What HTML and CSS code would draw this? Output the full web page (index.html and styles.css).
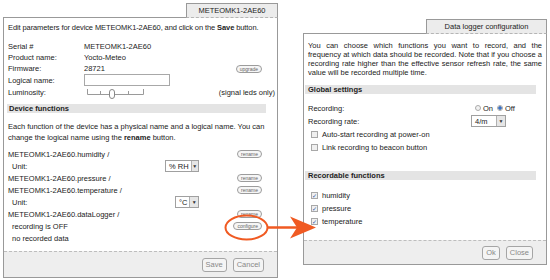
FILE: index.html
```html
<!DOCTYPE html>
<html lang="en">
<head>
    <meta charset="UTF-8">
    <meta name="viewport" content="width=device-width, initial-scale=1.0">
    <title>METEOMK1-2AE60</title>
    <link rel="stylesheet" href="styles.css">
</head>
<body>
    <div class="desk">
        <!-- device settings window -->
        <div class="win win-device">
            <div class="tabs"><div class="tab">METEOMK1-2AE60</div></div>
            <div class="panel">
                <div class="content">
                    <p class="intro">Edit parameters for device METEOMK1-2AE60, and click on the <b>Save</b> button.</p>
                    <div class="props">
                        <span>Serial #</span><span>METEOMK1-2AE60</span><span></span>
                        <span>Product name:</span><span>Yocto-Meteo</span><span></span>
                        <span>Firmware:</span><span>28721</span><span class="right"><button class="mini">upgrade</button></span>
                        <span>Logical name:</span><span><input class="text-in" type="text"></span><span></span>
                        <span>Luminosity:</span>
                        <span>
                            <svg class="slider" width="60" height="14" viewBox="0 0 60 14">
                                <path d="M3.5 4v5.5h56M16.5 6v3.5M29.5 6v3.5M44.5 6v3.5M59.5 4v5.5" fill="none" stroke="#9a9a9a" stroke-width="1"/>
                                <rect x="25.5" y="4.5" width="5" height="9" rx="2.5" fill="#fff" stroke="#888"/>
                            </svg>
                        </span>
                        <span class="right hint">(signal leds only)</span>
                    </div>
                    <div class="section">Device functions</div>
                    <p class="desc">Each function of the device has a physical name and a logical name. You can<br>change the logical name using the <b>rename</b> button.</p>
                    <div class="fn-list">
                        <div class="fn-row"><span class="fn-name">METEOMK1-2AE60.humidity /</span><button class="mini">rename</button></div>
                        <div class="fn-row sub"><span class="fn-name">Unit:</span><span class="select w-rh">% RH<i>&#9660;</i></span></div>
                        <div class="fn-row"><span class="fn-name">METEOMK1-2AE60.pressure /</span><button class="mini">rename</button></div>
                        <div class="fn-row"><span class="fn-name">METEOMK1-2AE60.temperature /</span><button class="mini">rename</button></div>
                        <div class="fn-row sub"><span class="fn-name">Unit:</span><span class="select w-deg">&deg;C<i>&#9660;</i></span></div>
                        <div class="fn-row"><span class="fn-name">METEOMK1-2AE60.dataLogger /</span><button class="mini">rename</button></div>
                        <div class="fn-row sub"><span class="fn-name">recording is OFF</span><button class="mini">configure</button></div>
                        <div class="fn-row sub"><span class="fn-name">no recorded data</span></div>
                    </div>
                </div>
                <div class="footer footer-device">
                    <button class="btn">Save</button>
                    <button class="btn">Cancel</button>
                </div>
            </div>
        </div>

        <!-- data logger window -->
        <div class="win win-logger">
            <div class="tabs"><div class="tab">Data logger configuration</div></div>
            <div class="panel">
                <div class="content">
                    <p class="intro justify">You can choose which functions you want to record, and the frequency at which data should be recorded. Note that if you choose a recording rate higher than the effective sensor refresh rate, the same value will be recorded multiple time.</p>
                    <div class="section">Global settings</div>
                    <div class="settings">
                        <span>Recording:</span>
                        <span class="radios">
                            <span class="radio"></span><span>On</span>
                            <span class="radio on"></span><span>Off</span>
                        </span>
                        <span>Recording rate:</span>
                        <span><span class="select w-rate">4/m<i>&#9660;</i></span></span>
                    </div>
                    <div class="check-row"><span class="check"></span>Auto-start recording at power-on</div>
                    <div class="check-row"><span class="check"></span>Link recording to beacon button</div>
                    <div class="section gap-top">Recordable functions</div>
                    <div class="funcs">
                        <div class="check-row"><span class="check on">&#10003;</span>humidity</div>
                        <div class="check-row"><span class="check on">&#10003;</span>pressure</div>
                        <div class="check-row"><span class="check on">&#10003;</span>temperature</div>
                    </div>
                </div>
                <div class="footer footer-logger">
                    <button class="btn">Ok</button>
                    <button class="btn">Close</button>
                </div>
            </div>
        </div>
    </div>

    <!-- annotation: circle round "configure" and arrow to the second window -->
    <svg class="callout" width="550" height="280" viewBox="0 0 550 280">
        <ellipse cx="246.5" cy="227.5" rx="21" ry="12" fill="none" stroke="#f05a22" stroke-width="2"/>
        <path d="M267.5 227.5H300" stroke="#f05a22" stroke-width="2.5" fill="none"/>
        <path d="M316 227.5L290 216.5L297 227.5L290 238.5Z" fill="#f05a22"/>
    </svg>
</body>
</html>
```

FILE: styles.css
```css
/* two configuration windows, VirtualHub style */
body {
    margin: 0;
    width: 550px;
    height: 280px;
    overflow: hidden;
    background-color: #fff;
    font-family: "Liberation Sans", Arial, sans-serif;
    font-size: 7.5px;
    color: #222;
    position: relative;
}

p {
    margin: 0;
}

.desk {
    display: flex;
    align-items: flex-start;
    padding-left: 3px;
}

.win-device {
    width: 275px;
    margin-top: 3px;
}

.win-logger {
    width: 244px;
    margin-top: 19px;
    margin-left: 25px;
}

.tabs {
    display: flex;
    justify-content: flex-end;
}

.tab {
    position: relative;
    z-index: 1;
    box-sizing: border-box;
    height: 15px;
    margin-bottom: -1px;
    border: 1px solid #999;
    border-bottom: 1px dashed #b5b5b5;
    background-color: #ececec;
    text-align: center;
    line-height: 13px;
}

.win-device .tab {
    width: 92px;
}

.win-logger .tab {
    width: 121px;
}

.panel {
    box-sizing: border-box;
    display: flex;
    flex-direction: column;
    border: 1px solid #999;
    background-color: #fff;
}

.win-device .panel {
    height: 261px;
}

.win-logger .panel {
    height: 232px;
}

.content {
    flex: 1;
}

.win-device .content {
    padding: 4px 2px 0 4px;
}

.win-logger .content {
    padding: 7px 4px 0 4px;
}

.intro {
    line-height: 11px;
    letter-spacing: -0.1px;
}

.justify {
    text-align: justify;
    line-height: 9px;
    letter-spacing: 0;
}

.props {
    display: grid;
    grid-template-columns: 76px 1fr auto;
    grid-template-rows: 11px 11px 11px 12px 12px;
    align-items: center;
    margin-top: 8px;
}

.right {
    text-align: right;
}

.props .right .mini {
    margin-right: 13px;
}

.text-in {
    display: block;
    box-sizing: border-box;
    width: 86px;
    height: 12px;
    margin: 0;
    border: 1px solid #a8a8a8;
    padding: 0;
}

.slider {
    display: block;
}

.section {
    height: 9px;
    line-height: 9px;
    padding-left: 2px;
    background-color: #e4e4e4;
    font-weight: bold;
}

.win-device .section {
    margin: 6px 9px 0 -1px;
}

.win-logger .section {
    margin: 8px 6px 0 -3px;
    padding-left: 3px;
}

.win-logger .gap-top {
    margin-top: 17px;
}

.desc {
    margin-top: 9px;
    line-height: 10.5px;
}

.fn-list {
    margin-top: 5px;
}

.fn-row {
    display: flex;
    align-items: center;
    height: 12px;
}

.fn-row .fn-name {
    flex: 1;
}

.fn-row.sub .fn-name {
    padding-left: 4px;
}

.fn-row .mini {
    margin-right: 13px;
}

.mini {
    box-sizing: border-box;
    height: 8px;
    padding: 0 3px;
    border: 1px solid #9c9c9c;
    border-radius: 4px;
    background-color: #f6f6f6;
    font-family: inherit;
    font-size: 5px;
    line-height: 6px;
    color: #666;
}

.select {
    display: inline-flex;
    align-items: center;
    justify-content: space-between;
    box-sizing: border-box;
    height: 12px;
    border: 1px solid #a0a0a0;
    background-color: #fff;
    padding-left: 3px;
    white-space: nowrap;
}

.select i {
    box-sizing: border-box;
    width: 9px;
    height: 10px;
    margin-left: 2px;
    border-left: 1px solid #b0b0b0;
    background-color: #e6e6e6;
    font-style: normal;
    font-size: 5px;
    line-height: 10px;
    text-align: center;
    color: #333;
}

.w-rh {
    width: 34px;
    margin-right: 76px;
}

.w-deg {
    width: 24px;
    margin-right: 76px;
}

.w-rate {
    width: 35px;
}

.footer {
    box-sizing: border-box;
    display: flex;
    justify-content: flex-end;
    align-items: center;
    gap: 6px;
    border-top: 1px dashed #bdbdbd;
    background-color: #eee;
}

.footer-device {
    height: 26px;
    padding-right: 13px;
}

.footer-logger {
    height: 24px;
    padding-right: 13px;
}

.btn {
    box-sizing: border-box;
    height: 14px;
    padding: 0 3px;
    border: 1px solid #a5a5a5;
    border-radius: 3px;
    background-color: #f4f4f4;
    font-family: inherit;
    font-size: 7.5px;
    color: #888;
}

.settings {
    display: grid;
    grid-template-columns: 163px 1fr;
    grid-template-rows: 12px 14px;
    align-items: center;
    margin-top: 8px;
}

.radios {
    display: flex;
    align-items: center;
    padding-left: 4px;
}

.radio {
    box-sizing: border-box;
    width: 6px;
    height: 6px;
    margin-right: 2px;
    border: 1px solid #aaa;
    border-radius: 50%;
    background-color: #f2f2f2;
}

.radio.on {
    margin-left: 4px;
    background: radial-gradient(circle, #3b72c4 0 1.5px, #f2f2f2 2px);
}

.check-row {
    display: flex;
    align-items: center;
    height: 13px;
    padding-left: 3px;
}

.check {
    box-sizing: border-box;
    width: 7px;
    height: 7px;
    margin-right: 4px;
    border: 1px solid #a8a8a8;
    background-color: #f0f0f0;
    font-size: 6px;
    line-height: 6px;
    text-align: center;
    color: #2c55a8;
}

.funcs {
    margin-top: 9px;
}

.callout {
    position: absolute;
    left: 0;
    top: 0;
    pointer-events: none;
}
```
